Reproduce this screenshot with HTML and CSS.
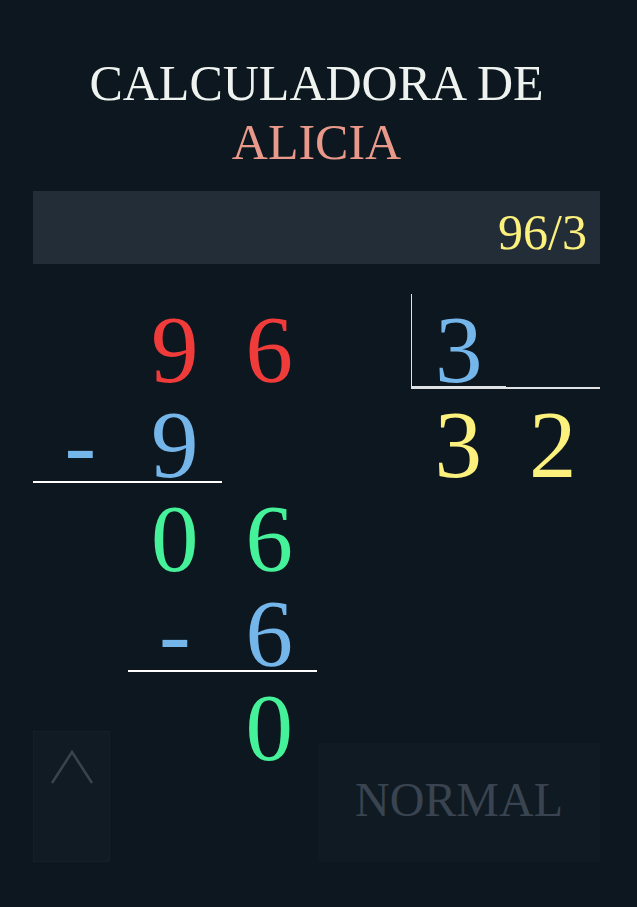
FILE: index.html
```html
<!DOCTYPE html>
<html lang="es">
<head>
<meta charset="utf-8">
<title>Calculadora de Alicia</title>
<link rel="stylesheet" href="styles.css">
</head>
<body>
<main class="app">
  <h1 class="title">CALCULADORA DE<br><span class="name">ALICIA</span></h1>
  <div class="display">96/3</div>
  <div class="board">
    <div class="cell"></div>
    <div class="cell red">9</div>
    <div class="cell red">6</div>
    <div class="cell"></div>
    <div class="cell blue divisor">3</div>
    <div class="cell divisor-tail"></div>

    <div class="cell blue under">-</div>
    <div class="cell blue under">9</div>
    <div class="cell"></div>
    <div class="cell"></div>
    <div class="cell yellow">3</div>
    <div class="cell yellow">2</div>

    <div class="cell"></div>
    <div class="cell green">0</div>
    <div class="cell green">6</div>
    <div class="cell"></div>
    <div class="cell"></div>
    <div class="cell"></div>

    <div class="cell"></div>
    <div class="cell blue under">-</div>
    <div class="cell blue under">6</div>
    <div class="cell"></div>
    <div class="cell"></div>
    <div class="cell"></div>

    <div class="cell"></div>
    <div class="cell"></div>
    <div class="cell green">0</div>
    <div class="cell"></div>
    <div class="cell"></div>
    <div class="cell"></div>
  </div>
  <div class="controls">
    <button class="btn-up" type="button" aria-label="subir">
      <svg width="77" height="131" viewBox="0 0 77 131" aria-hidden="true">
        <polyline points="19,52 39,21 59,52" fill="none" stroke="#3a444e" stroke-width="2.4" stroke-linejoin="miter"/>
      </svg>
    </button>
    <button class="btn-mode" type="button">NORMAL</button>
  </div>
</main>
</body>
</html>
```

FILE: styles.css
```css
html, body {
  margin: 0;
  padding: 0;
  background: #0d1720;
  height: 100%;
}

.app {
  padding: 54px 37px 0 33px;
  font-family: "Liberation Serif", "Times New Roman", serif;
}

.title {
  margin: 0;
  font-weight: normal;
  font-size: 50px;
  line-height: 59px;
  text-align: center;
  color: #eef3ef;
}

.name {
  color: #e8998a;
}

.display {
  margin-top: 19px;
  height: 73px;
  box-sizing: border-box;
  padding: 12px 13px 0 0;
  background: #222d38;
  color: #fdf17d;
  font-size: 50px;
  line-height: 58px;
  text-align: right;
}

.board {
  margin-top: 30px;
  display: grid;
  grid-template-columns: repeat(6, 94.5px);
  grid-auto-rows: 94.5px;
}

.cell {
  box-sizing: border-box;
  height: 94.5px;
  padding-top: 19px;
  font-size: 95px;
  line-height: 75px;
  text-align: center;
  white-space: nowrap;
}

.red { color: #f03b3b; }
.blue { color: #74b5ea; }
.green { color: #45f29a; }
.yellow { color: #fdf17d; }

.under {
  border-bottom: 2px solid #ffffff;
}

.divisor {
  border-left: 1px solid #dfe3e6;
  border-bottom: 3px solid #dfe3e6;
}

.divisor-tail {
  border-bottom: 2px solid #dfe3e6;
}

.controls {
  position: fixed;
  left: 33px;
  right: 37px;
  bottom: 45px;
  display: flex;
  justify-content: space-between;
  align-items: flex-end;
}

.btn-up {
  width: 77px;
  height: 131px;
  padding: 0;
  margin: 0;
  background: #111b24;
  border: 1px solid #141f29;
  box-sizing: border-box;
  display: block;
}

.btn-up svg {
  display: block;
  margin: -1px;
}

.btn-mode {
  width: 282px;
  height: 119px;
  margin: 0;
  padding: 0 0 6px 0;
  box-sizing: border-box;
  background: #101a23;
  border: none;
  color: #394450;
  font-family: "Liberation Serif", "Times New Roman", serif;
  font-size: 48px;
  line-height: 113px;
  text-align: center;
}
```
